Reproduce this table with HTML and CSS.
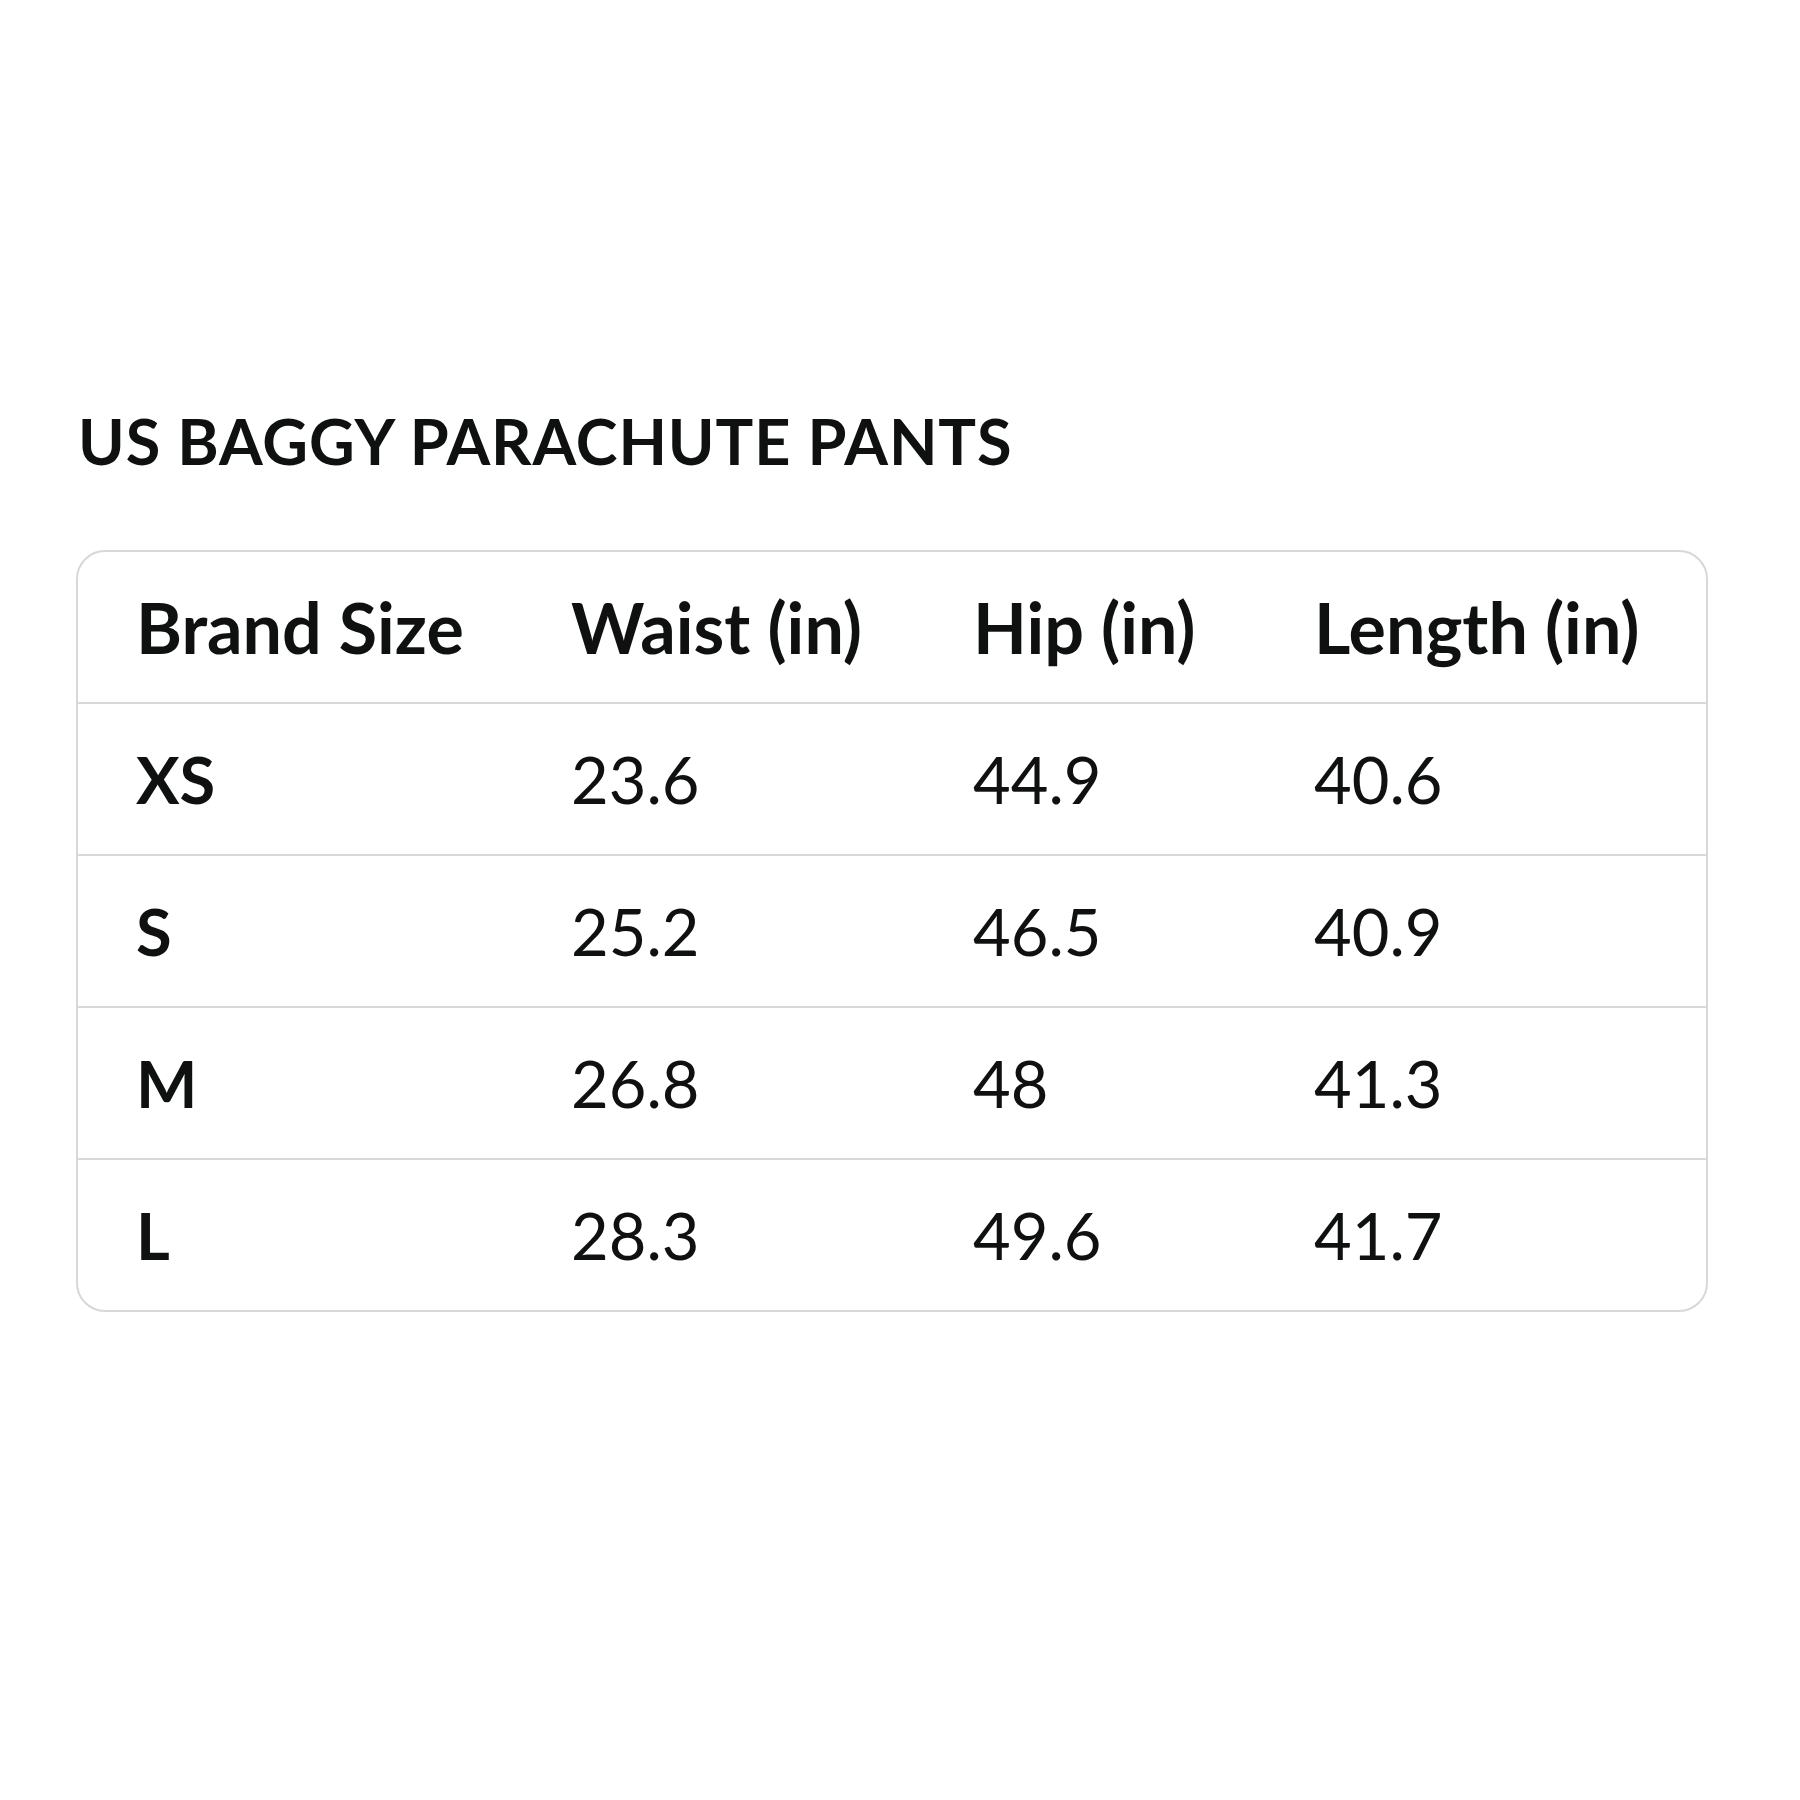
FILE: index.html
```html
<!DOCTYPE html>
<html lang="en">
<head>
<meta charset="utf-8">
<title>US Baggy Parachute Pants Size Chart</title>
<link rel="stylesheet" href="styles.css">
</head>
<body>
<main class="page">
  <h1 class="title">US BAGGY PARACHUTE PANTS</h1>
  <div class="card">
    <div class="row head">
      <div class="cell">Brand Size</div>
      <div class="cell">Waist (in)</div>
      <div class="cell">Hip (in)</div>
      <div class="cell">Length (in)</div>
    </div>
    <div class="row">
      <div class="cell size">XS</div>
      <div class="cell">23.6</div>
      <div class="cell">44.9</div>
      <div class="cell">40.6</div>
    </div>
    <div class="row">
      <div class="cell size">S</div>
      <div class="cell">25.2</div>
      <div class="cell">46.5</div>
      <div class="cell">40.9</div>
    </div>
    <div class="row">
      <div class="cell size">M</div>
      <div class="cell">26.8</div>
      <div class="cell">48</div>
      <div class="cell">41.3</div>
    </div>
    <div class="row last">
      <div class="cell size">L</div>
      <div class="cell">28.3</div>
      <div class="cell">49.6</div>
      <div class="cell">41.7</div>
    </div>
  </div>
</main>
</body>
</html>
```

FILE: styles.css
```css
html, body {
  margin: 0;
  padding: 0;
  background: #ffffff;
}

body {
  font-family: Lato, "Open Sans", "Liberation Sans", sans-serif;
  color: #0f1111;
}

.page {
  padding-top: 403px;
  padding-left: 76px;
  width: 1632px;
}

.title {
  margin: 0 0 71px 2px;
  font-size: 63px;
  line-height: 1.2;
  font-weight: 700;
  letter-spacing: 0.9px;
}

.card {
  border: 2px solid #d5d9d9;
  border-radius: 29px;
  overflow: hidden;
}

.row {
  display: grid;
  grid-template-columns: 435px 402px 341px 1fr;
  align-items: center;
  height: 150px;
  padding-left: 58px;
  border-bottom: 2px solid #d5d9d9;
  font-size: 65px;
}

.row.last {
  border-bottom: none;
}

.row.head {
  font-weight: 700;
  font-size: 70px;
}

.cell {
  white-space: nowrap;
}

.size {
  font-weight: 700;
}
```
